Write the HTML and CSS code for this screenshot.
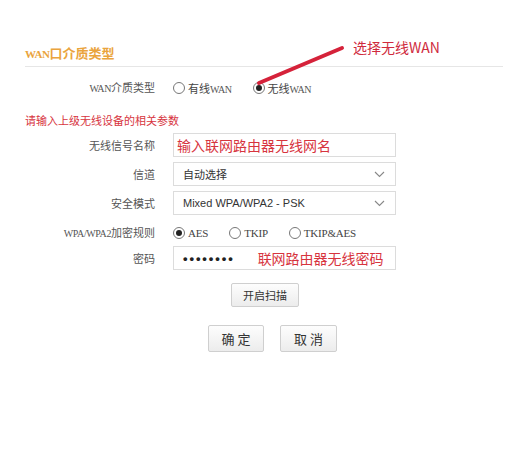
FILE: index.html
```html
<!DOCTYPE html>
<html lang="zh-CN">
<head>
  <meta charset="UTF-8" />
  <title>WAN口介质类型</title>
  <link rel="stylesheet" href="styles.css">
</head>
<body>
  <div class="page">
    <h3 class="title"><span class="en-b">WAN</span>口介质类型</h3>

    <div class="row row-wan">
      <label class="form-label"><span class="en">WAN</span>介质类型</label>
      <div class="radios">
        <span class="radio"></span><span class="opt">有线<span class="en">WAN</span></span>
        <span class="radio checked"></span><span class="opt">无线<span class="en">WAN</span></span>
      </div>
    </div>

    <p class="tip">请输入上级无线设备的相关参数</p>

    <div class="row row-ssid">
      <label class="form-label">无线信号名称</label>
      <div class="form-control">
        <span class="hint">输入联网路由器无线网名</span>
      </div>
    </div>

    <div class="row row-select">
      <label class="form-label">信道</label>
      <div class="form-control select">
        <span>自动选择</span>
        <svg class="chevron" width="11" height="7" viewBox="0 0 11 7"><path d="M1 1 L5.5 5.5 L10 1" fill="none" stroke="#888" stroke-width="1.1"/></svg>
      </div>
    </div>

    <div class="row row-select">
      <label class="form-label">安全模式</label>
      <div class="form-control select">
        <span>Mixed WPA/WPA2 - PSK</span>
        <svg class="chevron" width="11" height="7" viewBox="0 0 11 7"><path d="M1 1 L5.5 5.5 L10 1" fill="none" stroke="#888" stroke-width="1.1"/></svg>
      </div>
    </div>

    <div class="row row-enc">
      <label class="form-label"><span class="en">WPA/WPA2</span>加密规则</label>
      <div class="radios">
        <span class="radio checked"></span><span class="opt en">AES</span>
        <span class="radio"></span><span class="opt en">TKIP</span>
        <span class="radio"></span><span class="opt en">TKIP&amp;AES</span>
      </div>
    </div>

    <div class="row row-pwd">
      <label class="form-label">密码</label>
      <div class="form-control">
        <span class="dots">••••••••</span>
        <span class="hint hint-pwd">联网路由器无线密码</span>
      </div>
    </div>

    <div class="scan-row">
      <button class="btn btn-scan">开启扫描</button>
    </div>

    <div class="btn-row">
      <button class="btn btn-main">确 定</button>
      <button class="btn btn-main">取 消</button>
    </div>

    <div class="note">选择无线WAN</div>
    <svg class="arrow" width="528" height="468" viewBox="0 0 528 468">
      <path d="M259 83 L342 48" stroke="#d5223a" stroke-width="4" stroke-linecap="round"/>
    </svg>
  </div>
</body>
</html>
```

FILE: styles.css
```css
* {
  box-sizing: border-box;
  margin: 0;
  padding: 0;
}

body {
  background: #fff;
  font-family: "Noto Sans CJK SC", "Liberation Sans", sans-serif;
  font-size: 11px;
  color: #555;
}

.page {
  position: relative;
  width: 528px;
  height: 468px;
  padding-top: 45px;
}

.title {
  margin-left: 25px;
  width: 478px;
  height: 22px;
  border-bottom: 1px solid #e6e6e6;
  font-size: 13px;
  line-height: 16px;
  font-weight: bold;
  color: #eaa43d;
}

.en-b {
  font-family: "Liberation Serif", serif;
  font-size: 11px;
  letter-spacing: -0.4px;
}

.en {
  font-family: "Liberation Serif", serif;
  font-size: 10px;
  letter-spacing: -0.4px;
  color: #555;
}

.row {
  display: flex;
  align-items: center;
  gap: 18px;
}

.form-label {
  width: 155px;
  text-align: right;
  color: #555;
  line-height: 14px;
}

.row-wan {
  margin-top: 11px;
  height: 20px;
}

.tip {
  margin: 14px 0 0 25px;
  height: 16px;
  line-height: 16px;
  color: #d7343e;
}

.row-ssid {
  margin-top: 5px;
}

.row-select {
  margin-top: 5px;
}

.row-enc {
  margin-top: 8px;
  height: 20px;
}

.row-pwd {
  margin-top: 3px;
}

.radios {
  display: flex;
  align-items: center;
}

.radio {
  width: 12px;
  height: 12px;
  border: 1px solid #777;
  border-radius: 50%;
  display: flex;
  justify-content: center;
  align-items: center;
  margin-right: 3px;
}

.radio.checked::after {
  content: "";
  width: 6px;
  height: 6px;
  border-radius: 50%;
  background: #222;
}

.opt {
  margin-right: 21px;
  color: #444;
}

.opt.en {
  font-size: 11px;
  letter-spacing: -0.2px;
}

.form-control {
  width: 223px;
  height: 24px;
  border: 1px solid #dcdcdc;
  background: #fff;
  display: flex;
  align-items: center;
  padding-left: 9px;
  color: #333;
  font-family: "Liberation Sans", "Noto Sans CJK SC", sans-serif;
}

.select {
  justify-content: space-between;
  padding-right: 10px;
}

.hint {
  color: #d7343e;
  font-size: 14px;
  margin-left: -6px;
  font-family: "Noto Sans CJK SC", sans-serif;
}

.hint-pwd {
  margin-left: 23px;
}

.dots {
  font-size: 13px;
  letter-spacing: 1.9px;
  color: #222;
  font-weight: bold;
}

.btn {
  background: linear-gradient(#fdfdfd, #ececec);
  border: 1px solid #cfcfcf;
  border-radius: 2px;
  color: #333;
  font-family: "Noto Sans CJK SC", sans-serif;
  cursor: pointer;
}

.scan-row {
  margin-top: 13px;
  padding-left: 231px;
}

.btn-scan {
  width: 68px;
  height: 24px;
  font-size: 11px;
}

.btn-row {
  margin-top: 18px;
  padding-left: 208px;
  display: flex;
  gap: 16px;
}

.btn-main {
  width: 56px;
  height: 27px;
  font-size: 13px;
}

.btn-main + .btn-main {
  width: 57px;
}

.note {
  position: absolute;
  left: 353px;
  top: 37px;
  font-size: 14px;
  color: #cf2a3d;
  font-family: "Noto Sans CJK SC", sans-serif;
}

.arrow {
  position: absolute;
  left: 0;
  top: 0;
  pointer-events: none;
}
```
